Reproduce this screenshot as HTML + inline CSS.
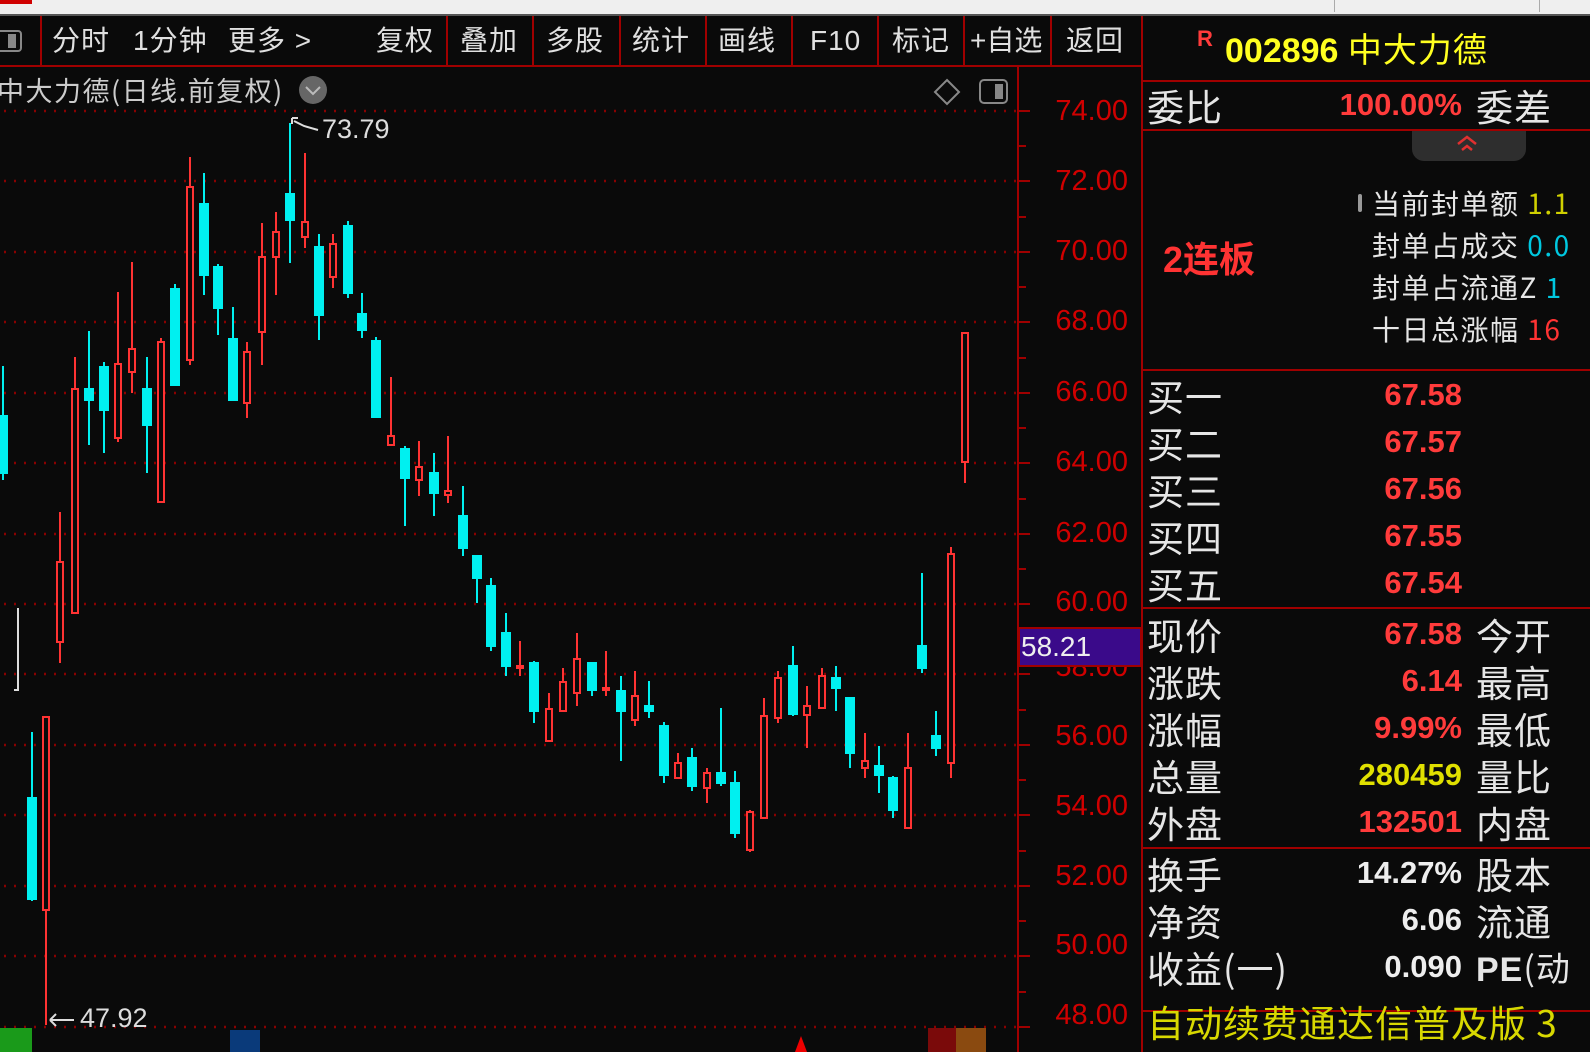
<!DOCTYPE html>
<html><head><meta charset="utf-8">
<style>
*{margin:0;padding:0;box-sizing:border-box}
body{width:1590px;height:1052px;background:#0a0a0a;overflow:hidden;position:relative;font-family:"Liberation Sans","Noto Sans CJK SC",sans-serif;color:#ddd}
.a{position:absolute;white-space:nowrap}
.tb{font-size:28px;line-height:30px;top:26px;color:#e0e0e0;letter-spacing:1px}
.lab{font-size:37px;line-height:40px;color:#e6e6e6;left:1147px;font-family:"Noto Sans CJK SC","WenQuanYi Zen Hei",sans-serif;letter-spacing:1px}
.lab2{font-size:37px;line-height:40px;color:#e6e6e6;left:1476px;font-family:"Noto Sans CJK SC","WenQuanYi Zen Hei",sans-serif;letter-spacing:1px}
.val{font-size:31px;line-height:40px;font-weight:bold;right:128px;text-align:right;color:#ff3b3b}
.ax{font-size:29px;line-height:30px;color:#d00000;right:462px;text-align:right}
.sm{font-size:28px;line-height:32px;font-family:"Noto Sans CJK SC",sans-serif;color:#e6e6e6;left:1372px;letter-spacing:1.5px}
.hl{position:absolute;height:2px;background:#a00000;left:1142px;width:448px}
</style></head><body>
<div class="a" style="left:0;top:0;width:1590px;height:14px;background:#efefef"></div>
<div class="a" style="left:0;top:0;width:32px;height:4px;background:#d00000"></div>
<div class="a" style="left:1334px;top:0;width:1px;height:12px;background:#aaa"></div>
<div class="a" style="left:1539px;top:0;width:1px;height:12px;background:#aaa"></div>
<div class="a" style="left:0;top:14px;width:1590px;height:2px;background:#555"></div>
<div class="a" style="left:-6px;top:30px;width:28px;height:22px;border:2px solid #888;border-radius:4px"></div>
<div class="a" style="left:8px;top:34px;width:8px;height:14px;background:#888"></div>
<div class="a tb" style="left:52px">分时</div>
<div class="a tb" style="left:133px">1分钟</div>
<div class="a tb" style="left:228px">更多 &gt;</div>
<div class="a tb" style="left:376px">复权</div>
<div class="a tb" style="left:460px">叠加</div>
<div class="a tb" style="left:546px">多股</div>
<div class="a tb" style="left:632px">统计</div>
<div class="a tb" style="left:718px">画线</div>
<div class="a tb" style="left:810px">F10</div>
<div class="a tb" style="left:892px">标记</div>
<div class="a tb" style="left:970px;letter-spacing:0">+自选</div>
<div class="a tb" style="left:1066px">返回</div>
<div class="a" style="left:0;top:65px;width:1142px;height:2px;background:#a00000"></div>
<div class="a" style="left:40px;top:16px;width:2px;height:50px;background:#a00000"></div>
<div class="a" style="left:446px;top:16px;width:2px;height:50px;background:#a00000"></div>
<div class="a" style="left:532px;top:16px;width:2px;height:50px;background:#a00000"></div>
<div class="a" style="left:619px;top:16px;width:2px;height:50px;background:#a00000"></div>
<div class="a" style="left:705px;top:16px;width:2px;height:50px;background:#a00000"></div>
<div class="a" style="left:791px;top:16px;width:2px;height:50px;background:#a00000"></div>
<div class="a" style="left:877px;top:16px;width:2px;height:50px;background:#a00000"></div>
<div class="a" style="left:963px;top:16px;width:2px;height:50px;background:#a00000"></div>
<div class="a" style="left:1050px;top:16px;width:2px;height:50px;background:#a00000"></div>
<div class="a" style="left:1141px;top:16px;width:2px;height:1036px;background:#a00000"></div>

<div class="a" style="left:-3px;top:74px;font-size:27px;line-height:32px;color:#ccc;font-family:'Noto Sans CJK SC',sans-serif;letter-spacing:1.5px">中大力德(日线.前复权)</div>

<svg class="a" style="left:0;top:0" width="1142" height="1052">
<circle cx="313" cy="90" r="14" fill="#666"/>
<path d="M306 87 L313 94 L320 87" stroke="#bbb" stroke-width="2" fill="none"/>
<path d="M947 80 L959 92 L947 104 L935 92Z" stroke="#888" stroke-width="2" fill="none"/>
<rect x="980" y="80" width="27" height="23" rx="4" stroke="#888" stroke-width="2" fill="none"/>
<rect x="995" y="84" width="8" height="15" fill="#888"/>
<g stroke="#8a0000" stroke-width="2.5" stroke-dasharray="2 8">
<line x1="4" y1="111" x2="1016" y2="111"/><line x1="4" y1="181" x2="1016" y2="181"/><line x1="4" y1="252" x2="1016" y2="252"/><line x1="4" y1="322" x2="1016" y2="322"/><line x1="4" y1="393" x2="1016" y2="393"/><line x1="4" y1="463" x2="1016" y2="463"/><line x1="4" y1="534" x2="1016" y2="534"/><line x1="4" y1="604" x2="1016" y2="604"/><line x1="4" y1="674" x2="1016" y2="674"/><line x1="4" y1="745" x2="1016" y2="745"/><line x1="4" y1="815" x2="1016" y2="815"/><line x1="4" y1="886" x2="1016" y2="886"/><line x1="4" y1="956" x2="1016" y2="956"/><line x1="4" y1="1027" x2="1016" y2="1027"/>
</g>
<line x1="1018" y1="66" x2="1018" y2="1052" stroke="#a00000" stroke-width="2"/>
<g stroke="#a00000" stroke-width="2">
<path d="M1018 111h12M1018 146h8M1018 181h12M1018 217h8M1018 252h12M1018 287h8M1018 322h12M1018 358h8M1018 393h12M1018 428h8M1018 463h12M1018 499h8M1018 534h12M1018 569h8M1018 604h12M1018 639h8M1018 674h12M1018 710h8M1018 745h12M1018 780h8M1018 815h12M1018 851h8M1018 886h12M1018 921h8M1018 956h12M1018 992h8M1018 1027h12"/>
</g>
<path d="M18 608V690h-4" stroke="#ddd" stroke-width="2" fill="none"/>
<g stroke="#00f0f0" stroke-width="2" fill="#00f0f0">
<line x1="3" y1="366" x2="3" y2="480"/><rect x="-1" y="416" width="8" height="57"/>
<line x1="32" y1="732" x2="32" y2="901"/><rect x="28" y="798" width="8" height="101"/>
<line x1="89" y1="331" x2="89" y2="445"/><rect x="85" y="389" width="8" height="11"/>
<line x1="104" y1="362" x2="104" y2="453"/><rect x="100" y="367" width="8" height="43"/>
<line x1="147" y1="357" x2="147" y2="473"/><rect x="143" y="389" width="8" height="36"/>
<line x1="175" y1="284" x2="175" y2="385"/><rect x="171" y="289" width="8" height="96"/>
<line x1="204" y1="173" x2="204" y2="295"/><rect x="200" y="204" width="8" height="71"/>
<line x1="218" y1="264" x2="218" y2="335"/><rect x="214" y="267" width="8" height="41"/>
<line x1="233" y1="307" x2="233" y2="400"/><rect x="229" y="339" width="8" height="61"/>
<line x1="290" y1="123" x2="290" y2="263"/><rect x="286" y="194" width="8" height="26"/>
<line x1="319" y1="234" x2="319" y2="340"/><rect x="315" y="247" width="8" height="68"/>
<line x1="348" y1="221" x2="348" y2="298"/><rect x="344" y="226" width="8" height="67"/>
<line x1="362" y1="293" x2="362" y2="338"/><rect x="358" y="314" width="8" height="16"/>
<line x1="376" y1="337" x2="376" y2="417"/><rect x="372" y="341" width="8" height="76"/>
<line x1="405" y1="446" x2="405" y2="526"/><rect x="401" y="449" width="8" height="29"/>
<line x1="434" y1="453" x2="434" y2="516"/><rect x="430" y="473" width="8" height="20"/>
<line x1="463" y1="486" x2="463" y2="556"/><rect x="459" y="516" width="8" height="32"/>
<line x1="477" y1="556" x2="477" y2="603"/><rect x="473" y="556" width="8" height="22"/>
<line x1="491" y1="578" x2="491" y2="651"/><rect x="487" y="586" width="8" height="60"/>
<line x1="506" y1="613" x2="506" y2="676"/><rect x="502" y="633" width="8" height="33"/>
<line x1="534" y1="661" x2="534" y2="723"/><rect x="530" y="663" width="8" height="48"/>
<line x1="592" y1="663" x2="592" y2="696"/><rect x="588" y="663" width="8" height="27"/>
<line x1="621" y1="676" x2="621" y2="761"/><rect x="617" y="691" width="8" height="20"/>
<line x1="649" y1="681" x2="649" y2="718"/><rect x="645" y="706" width="8" height="5"/>
<line x1="664" y1="722" x2="664" y2="783"/><rect x="660" y="726" width="8" height="49"/>
<line x1="692" y1="748" x2="692" y2="791"/><rect x="688" y="758" width="8" height="28"/>
<line x1="721" y1="708" x2="721" y2="786"/><rect x="717" y="773" width="8" height="10"/>
<line x1="735" y1="771" x2="735" y2="838"/><rect x="731" y="783" width="8" height="50"/>
<line x1="793" y1="646" x2="793" y2="716"/><rect x="789" y="666" width="8" height="48"/>
<line x1="836" y1="666" x2="836" y2="711"/><rect x="832" y="678" width="8" height="10"/>
<line x1="850" y1="698" x2="850" y2="768"/><rect x="846" y="698" width="8" height="55"/>
<line x1="879" y1="746" x2="879" y2="793"/><rect x="875" y="766" width="8" height="9"/>
<line x1="893" y1="776" x2="893" y2="818"/><rect x="889" y="778" width="8" height="32"/>
<line x1="922" y1="573" x2="922" y2="673"/><rect x="918" y="646" width="8" height="22"/>
<line x1="936" y1="711" x2="936" y2="756"/><rect x="932" y="736" width="8" height="12"/>
</g>
<g stroke="#ff3333" stroke-width="2" fill="#0a0a0a">
<line x1="46" y1="717" x2="46" y2="1025"/><rect x="43" y="717" width="6" height="193"/>
<line x1="60" y1="512" x2="60" y2="663"/><rect x="57" y="562" width="6" height="80"/>
<line x1="75" y1="357" x2="75" y2="613"/><rect x="72" y="389" width="6" height="224"/>
<line x1="118" y1="292" x2="118" y2="442"/><rect x="115" y="364" width="6" height="74"/>
<line x1="132" y1="262" x2="132" y2="393"/><rect x="129" y="349" width="6" height="23"/>
<line x1="161" y1="338" x2="161" y2="502"/><rect x="158" y="342" width="6" height="160"/>
<line x1="190" y1="157" x2="190" y2="365"/><rect x="187" y="187" width="6" height="173"/>
<line x1="247" y1="342" x2="247" y2="418"/><rect x="244" y="352" width="6" height="51"/>
<line x1="262" y1="223" x2="262" y2="365"/><rect x="259" y="257" width="6" height="75"/>
<line x1="276" y1="212" x2="276" y2="295"/><rect x="273" y="232" width="6" height="25"/>
<line x1="305" y1="153" x2="305" y2="248"/><rect x="302" y="222" width="6" height="15"/>
<line x1="333" y1="234" x2="333" y2="288"/><rect x="330" y="244" width="6" height="33"/>
<line x1="391" y1="377" x2="391" y2="445"/><rect x="388" y="436" width="6" height="9"/>
<line x1="419" y1="441" x2="419" y2="496"/><rect x="416" y="467" width="6" height="13"/>
<line x1="448" y1="436" x2="448" y2="503"/><rect x="445" y="491" width="6" height="4"/>
<line x1="520" y1="641" x2="520" y2="676"/><rect x="517" y="666" width="6" height="2"/>
<line x1="549" y1="693" x2="549" y2="741"/><rect x="546" y="709" width="6" height="32"/>
<line x1="563" y1="668" x2="563" y2="711"/><rect x="560" y="682" width="6" height="29"/>
<line x1="577" y1="633" x2="577" y2="706"/><rect x="574" y="659" width="6" height="34"/>
<line x1="606" y1="651" x2="606" y2="696"/><rect x="603" y="688" width="6" height="2"/>
<line x1="635" y1="671" x2="635" y2="726"/><rect x="632" y="696" width="6" height="24"/>
<line x1="678" y1="753" x2="678" y2="778"/><rect x="675" y="763" width="6" height="15"/>
<line x1="707" y1="768" x2="707" y2="803"/><rect x="704" y="773" width="6" height="15"/>
<line x1="750" y1="810" x2="750" y2="852"/><rect x="747" y="812" width="6" height="38"/>
<line x1="764" y1="698" x2="764" y2="818"/><rect x="761" y="716" width="6" height="102"/>
<line x1="778" y1="671" x2="778" y2="723"/><rect x="775" y="678" width="6" height="40"/>
<line x1="807" y1="686" x2="807" y2="748"/><rect x="804" y="706" width="6" height="9"/>
<line x1="822" y1="668" x2="822" y2="708"/><rect x="819" y="676" width="6" height="32"/>
<line x1="865" y1="733" x2="865" y2="778"/><rect x="862" y="761" width="6" height="7"/>
<line x1="908" y1="733" x2="908" y2="828"/><rect x="905" y="768" width="6" height="60"/>
<line x1="951" y1="547" x2="951" y2="778"/><rect x="948" y="554" width="6" height="209"/>
<line x1="965" y1="333" x2="965" y2="483"/><rect x="962" y="333" width="6" height="129"/>
</g>
<path d="M292 118 L292 124 M292 118 L298 118 M294 121 L304 126 L318 130" stroke="#ddd" stroke-width="2" fill="none"/>
<path d="M50 1020 L74 1020 M50 1020 L56 1014 M50 1020 L56 1026" stroke="#ddd" stroke-width="2" fill="none"/>
<rect x="0" y="1028" width="32" height="24" fill="#1a9a1a"/>
<rect x="230" y="1030" width="30" height="22" fill="#0a3a7a"/>
<path d="M795 1052 L801 1036 L807 1052Z" fill="#e00"/>
<rect x="928" y="1028" width="28" height="24" fill="#7a0a0a"/>
<rect x="956" y="1028" width="30" height="24" fill="#8a4a10"/>
</svg>
<div class="a" style="left:322px;top:114px;font-size:27px;line-height:30px;color:#ddd">73.79</div>
<div class="a" style="left:80px;top:1003px;font-size:27px;line-height:30px;color:#ddd">47.92</div>

<div class="a ax" style="top:96px">74.00</div>
<div class="a ax" style="top:166px">72.00</div>
<div class="a ax" style="top:236px">70.00</div>
<div class="a ax" style="top:306px">68.00</div>
<div class="a ax" style="top:377px">66.00</div>
<div class="a ax" style="top:447px">64.00</div>
<div class="a ax" style="top:518px">62.00</div>
<div class="a ax" style="top:587px">60.00</div>
<div class="a ax" style="top:652px">58.00</div>
<div class="a ax" style="top:721px">56.00</div>
<div class="a ax" style="top:791px">54.00</div>
<div class="a ax" style="top:861px">52.00</div>
<div class="a ax" style="top:930px">50.00</div>
<div class="a ax" style="top:1000px">48.00</div>
<div class="a" style="left:1018px;top:627px;width:124px;height:40px;background:#3a0a8a;border:2px solid #a00000;color:#eee;font-size:28px;line-height:36px;padding-left:1px">58.21</div>

<div class="a" style="left:1197px;top:26px;font-size:22px;font-weight:bold;color:#ff3b3b">R</div>
<div class="a" style="left:1225px;top:26px;font-size:34px;line-height:44px;font-weight:bold;color:#ffff20">002896 <span style="font-weight:normal;font-family:'Noto Sans CJK SC',sans-serif;letter-spacing:1px">中大力德</span></div>
<div class="hl" style="top:80px"></div>
<div class="a lab" style="top:85px">委比</div>
<div class="a val" style="top:85px">100.00%</div>
<div class="a lab2" style="top:85px">委差</div>
<div class="hl" style="top:129px"></div>
<div class="a" style="left:1412px;top:131px;width:114px;height:30px;background:#2e2e2e;border-radius:0 0 12px 12px"></div>
<svg class="a" style="left:1455px;top:135px" width="24" height="20"><path d="M3 9 L12 2 L21 9 M7 15 L12 11 L17 15" stroke="#e03030" stroke-width="2.5" fill="none"/></svg>
<div class="a" style="left:1163px;top:238px;font-size:36px;line-height:44px;font-weight:bold;color:#ff3333;font-family:'Liberation Sans','Noto Sans CJK SC',sans-serif">2连板</div>
<div class="a" style="left:1358px;top:194px;width:4px;height:18px;background:#999;border-radius:2px"></div>
<div class="a sm" style="top:187px">当前封单额 <span style="color:#d0d000">1.1</span></div>
<div class="a sm" style="top:229px">封单占成交 <span style="color:#00c8e0">0.0</span></div>
<div class="a sm" style="top:271px">封单占流通Z <span style="color:#00c8e0">1</span></div>
<div class="a sm" style="top:313px">十日总涨幅 <span style="color:#ff3333">16</span></div>
<div class="hl" style="top:369px"></div>
<div class="a lab" style="top:375px">买一</div><div class="a val" style="top:375px">67.58</div>
<div class="a lab" style="top:422px">买二</div><div class="a val" style="top:422px">67.57</div>
<div class="a lab" style="top:469px">买三</div><div class="a val" style="top:469px">67.56</div>
<div class="a lab" style="top:516px">买四</div><div class="a val" style="top:516px">67.55</div>
<div class="a lab" style="top:563px">买五</div><div class="a val" style="top:563px">67.54</div>
<div class="hl" style="top:607px"></div>
<div class="a lab" style="top:614px">现价</div><div class="a val" style="top:614px">67.58</div><div class="a lab2" style="top:614px">今开</div>
<div class="a lab" style="top:661px">涨跌</div><div class="a val" style="top:661px">6.14</div><div class="a lab2" style="top:661px">最高</div>
<div class="a lab" style="top:708px">涨幅</div><div class="a val" style="top:708px">9.99%</div><div class="a lab2" style="top:708px">最低</div>
<div class="a lab" style="top:755px">总量</div><div class="a val" style="top:755px;color:#e0e000">280459</div><div class="a lab2" style="top:755px">量比</div>
<div class="a lab" style="top:802px">外盘</div><div class="a val" style="top:802px">132501</div><div class="a lab2" style="top:802px">内盘</div>
<div class="hl" style="top:847px"></div>
<div class="a lab" style="top:853px">换手</div><div class="a val" style="top:853px;color:#eee">14.27%</div><div class="a lab2" style="top:853px">股本</div>
<div class="a lab" style="top:900px">净资</div><div class="a val" style="top:900px;color:#eee">6.06</div><div class="a lab2" style="top:900px">流通</div>
<div class="a lab" style="top:947px">收益(一)</div><div class="a val" style="top:947px;color:#eee">0.090</div><div class="a lab2" style="top:947px;font-size:34px"><b style="font-family:'Liberation Sans',sans-serif">PE</b>(动</div>
<div class="hl" style="top:1010px"></div>
<div class="a lab" style="top:1001px;color:#d8d800">自动续费通达信普及版 3</div>
</body></html>
